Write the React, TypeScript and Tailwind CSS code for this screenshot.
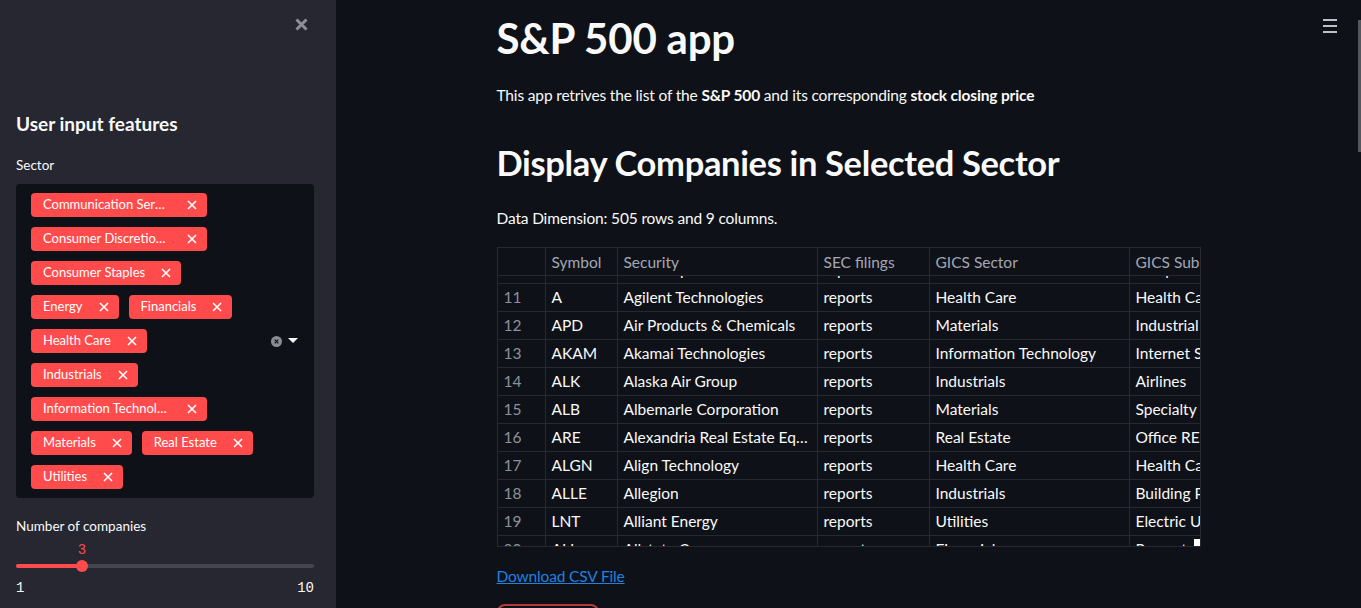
import React from "react";

const sectors = [
  "Communication Services",
  "Consumer Discretionary",
  "Consumer Staples",
  "Energy",
  "Financials",
  "Health Care",
  "Industrials",
  "Information Technology",
  "Materials",
  "Real Estate",
  "Utilities",
];

const rows = [
  ["10", "AES", "AES Corp", "reports", "Utilities", "Independent Power Producers"],
  ["11", "A", "Agilent Technologies", "reports", "Health Care", "Health Care Equipment"],
  ["12", "APD", "Air Products & Chemicals", "reports", "Materials", "Industrial Gases"],
  ["13", "AKAM", "Akamai Technologies", "reports", "Information Technology", "Internet Software & Services"],
  ["14", "ALK", "Alaska Air Group", "reports", "Industrials", "Airlines"],
  ["15", "ALB", "Albemarle Corporation", "reports", "Materials", "Specialty Chemicals"],
  ["16", "ARE", "Alexandria Real Estate Equities", "reports", "Real Estate", "Office REITs"],
  ["17", "ALGN", "Align Technology", "reports", "Health Care", "Health Care Supplies"],
  ["18", "ALLE", "Allegion", "reports", "Industrials", "Building Products"],
  ["19", "LNT", "Alliant Energy", "reports", "Utilities", "Electric Utilities"],
  ["20", "ALL", "Allstate Corp", "reports", "Financials", "Property & Casualty Insurance"],
];

const cols = ["w-[48px]", "w-[72px]", "w-[200px]", "w-[112px]", "w-[200px]", "w-[200px]"];
const headers = ["", "Symbol", "Security", "SEC filings", "GICS Sector", "GICS Sub-Industry"];

function Tag({ label }: { label: string }) {
  return (
    <div className="flex h-6 max-w-[176px] items-center rounded bg-[#ff4b4b] pl-3 pr-[10px] text-[13px] text-white">
      <span className="truncate">{label}</span>
      <svg width="10" height="10" viewBox="0 0 10 10" className="ml-4 shrink-0">
        <path d="M1 1L9 9M9 1L1 9" stroke="white" strokeWidth="1.6" />
      </svg>
    </div>
  );
}

function Sidebar() {
  return (
    <aside className="flex h-full w-[336px] shrink-0 flex-col bg-[#262730] pl-4 pr-[22px]">
      <div className="flex justify-end pt-[18px] pr-[6px]">
        <svg width="13" height="13" viewBox="0 0 13 13">
          <path d="M1.5 1.5L11.5 11.5M11.5 1.5L1.5 11.5" stroke="#8e8f96" strokeWidth="3" />
        </svg>
      </div>
      <h2 className="mt-[80px] text-[19px] font-bold leading-[26px] text-[#fafafa]">User input features</h2>
      <div className="mt-[18px] text-[13.5px] leading-5 text-[#fafafa]">Sector</div>
      <div className="mt-[9px] flex h-[314px] items-center rounded bg-[#0e1117] pl-[15px] pr-4">
        <div className="flex w-[232px] flex-wrap content-start gap-x-[10px] gap-y-[10px] self-start pt-[9px]">
          {sectors.map((s) => (
            <Tag key={s} label={s} />
          ))}
        </div>
        <div className="ml-auto flex items-center gap-[6px]">
          <svg width="11" height="11" viewBox="0 0 12 12">
            <circle cx="6" cy="6" r="6" fill="#8b8d94" />
            <path d="M4 4L8 8M8 4L4 8" stroke="#0e1117" strokeWidth="1.4" />
          </svg>
          <svg width="10" height="6" viewBox="0 0 10 6">
            <path d="M0 0H10L5 5Z" fill="#fafafa" />
          </svg>
        </div>
      </div>
      <div className="mt-[18px] text-[13.5px] leading-5 text-[#fafafa]">Number of companies</div>
      <div className="relative mt-1 h-[50px]">
        <div className="absolute left-[50px] top-0 w-8 text-center font-['Liberation_Mono',monospace] text-[14px] text-[#ff4b4b]">3</div>
        <div className="absolute left-0 right-0 top-[24px] h-1 rounded bg-[#44454f]">
          <div className="h-1 w-[66px] rounded bg-[#ff4b4b]" />
        </div>
        <div className="absolute left-[60px] top-[20px] h-3 w-3 rounded-full bg-[#ff4b4b]" />
        <div className="absolute left-0 right-0 top-[38px] flex justify-between font-['Liberation_Mono',monospace] text-[14px] leading-5 text-[#fafafa]">
          <span>1</span>
          <span>10</span>
        </div>
      </div>
    </aside>
  );
}

function Table() {
  return (
    <div className="h-[300px] w-[704px] overflow-hidden border border-[#262930] text-[15.5px]">
      <div className="flex h-[28px] border-b border-[#262930] text-[#a3a8b4]">
        {headers.map((h, i) => (
          <div key={i} className={`${cols[i]} shrink-0 truncate border-r border-[#262930] px-[6px] leading-[28px]`}>
            {h}
          </div>
        ))}
      </div>
      <div className="h-[270px] overflow-hidden">
        <div className="-mt-[20px]">
          {rows.map((r) => (
            <div key={r[0]} className="flex h-[28px] border-b border-[#262930] text-[#fafafa]">
              {r.map((c, i) => (
                <div
                  key={i}
                  className={`${cols[i]} shrink-0 truncate border-r border-[#262930] px-[6px] leading-[27px] ${i === 0 ? "text-[#8d919b]" : ""}`}
                >
                  {c}
                </div>
              ))}
            </div>
          ))}
        </div>
      </div>
    </div>
  );
}

export default function App() {
  return (
    <div className="flex h-[608px] w-full overflow-hidden bg-[#0e1117] font-['Lato','Noto_Sans',sans-serif] text-[#fafafa]">
      <Sidebar />
      <main className="relative flex-1 overflow-hidden">
        <div className="mx-auto w-[704px]">
          <h1 className="pt-[12px] text-[42px] font-bold leading-[52px] tracking-[-0.005em]">S&amp;P 500 app</h1>
          <p className="mt-[19px] text-[15.5px] leading-6 tracking-[-0.01em]">
            This app retrives the list of the <b>S&amp;P 500</b> and its corresponding <b>stock closing price</b>
          </p>
          <h2 className="mt-[34px] text-[34.5px] font-bold leading-[44px] tracking-[-0.01em]">Display Companies in Selected Sector</h2>
          <p className="mt-[21px] text-[15.5px] leading-6 tracking-[-0.01em]">Data Dimension: 505 rows and 9 columns.</p>
          <div className="relative mt-[17px]">
            <Table />
            <div className="absolute bottom-[1px] right-[1px] h-[7px] w-[6px] bg-white" />
          </div>
          <a className="mt-[17px] block w-fit text-[15.5px] leading-6 tracking-[-0.01em] text-[#1c83e1] underline">Download CSV File</a>
          <div className="mt-[16px] h-10 w-[102px] rounded-lg border-2 border-[#b33b3b] bg-[#0e1117]" />
        </div>
        <svg width="14" height="14" viewBox="0 0 14 14" className="absolute right-[24px] top-[19px]">
          <path d="M0 1H14M0 7H14M0 13H14" stroke="#fafafa" strokeWidth="1.6" />
        </svg>
        <div className="absolute right-0 top-[20px] h-[132px] w-[3px] bg-[#55575e]" />
      </main>
    </div>
  );
}
